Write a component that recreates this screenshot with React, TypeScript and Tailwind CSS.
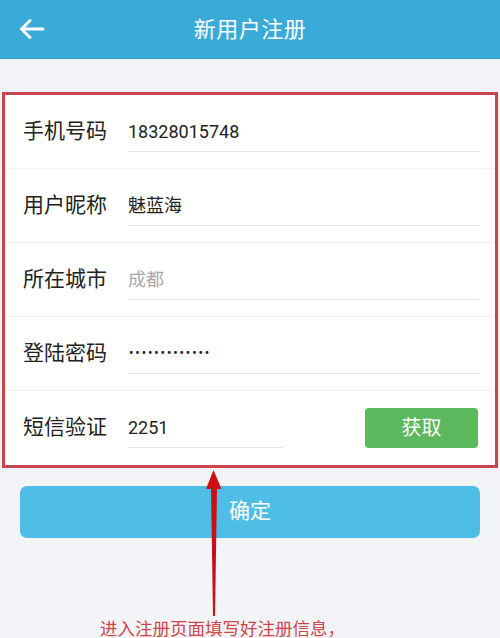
import React from "react";

const font = { fontFamily: 'Roboto, "Noto Sans CJK SC", "Noto Sans", sans-serif' };

function Row({
  label,
  children,
  last,
}: {
  label: string;
  children: React.ReactNode;
  last?: boolean;
}) {
  return (
    <div
      className={`flex items-center h-[74px] ${last ? "" : "border-b border-[#f0f0f0]"}`}
    >
      <div className="w-[123px] pl-[18px] text-[21px] text-[#222] shrink-0">{label}</div>
      {children}
    </div>
  );
}

export default function App() {
  return (
    <div className="relative w-[500px] h-[638px] overflow-hidden bg-[#f3f4f8]" style={font}>
      {/* Header */}
      <div className="relative h-[59px] bg-[#3aabd8] flex items-center justify-center border-b border-[#2f9ec9]">
        <svg
          className="absolute left-[18px] top-[17px]"
          width="28"
          height="24"
          viewBox="0 0 28 24"
          fill="none"
          stroke="white"
          strokeWidth="3"
          strokeLinecap="round"
          strokeLinejoin="round"
        >
          <path d="M25 12H4" />
          <path d="M12 3.5L3.5 12L12 20.5" />
        </svg>
        <div className="text-white text-[22px] tracking-[0.5px]">新用户注册</div>
      </div>

      {/* Form box */}
      <div className="mx-[2px] mt-[33px] border-[3px] border-[#c8454b] bg-white">
        <Row label="手机号码">
          <div className="flex-1 mr-[16px] h-[40px] flex items-center border-b border-[#e2e2e2] text-[18px] text-[#222]">
            18328015748
          </div>
        </Row>
        <Row label="用户昵称">
          <div className="flex-1 mr-[16px] h-[40px] flex items-center border-b border-[#e2e2e2] text-[18px] text-[#222]">
            魅蓝海
          </div>
        </Row>
        <Row label="所在城市">
          <div className="flex-1 mr-[16px] h-[40px] flex items-center border-b border-[#e2e2e2] text-[18px] text-[#a8a8a8]">
            成都
          </div>
        </Row>
        <Row label="登陆密码">
          <div className="flex-1 mr-[16px] h-[40px] flex items-center border-b border-[#e2e2e2] text-[12px] font-bold tracking-[2px] text-[#222] pl-[1px]">
            •••••••••••••
          </div>
        </Row>
        <Row label="短信验证" last>
          <div className="w-[154px] h-[40px] flex items-center border-b border-[#e2e2e2] text-[18px] text-[#222]">
            2251
          </div>
          <div className="ml-auto mr-[17px] w-[113px] h-[40px] rounded-[4px] bg-[#5cb85c] flex items-center justify-center text-white text-[20px]">
            获取
          </div>
        </Row>
      </div>

      {/* Confirm */}
      <div className="mx-[20px] mt-[18px] h-[52px] rounded-[7px] bg-[#4fbee6] flex items-center justify-center text-white text-[21px]">
        确定
      </div>

      {/* Caption */}
      <div className="mt-[82px] pl-[100px] text-[17.5px] leading-[18px] text-[#cf4646] whitespace-nowrap">
        进入注册页面填写好注册信息，
      </div>

      {/* Annotation arrow */}
      <svg
        className="absolute left-0 top-0 pointer-events-none"
        width="500"
        height="638"
        viewBox="0 0 500 638"
      >
        <path d="M213.5 470 L221.5 489 L217 489 L215 616 L213 616 L211 489 L206 489 Z" fill="#cc0f12" />
      </svg>
    </div>
  );
}
